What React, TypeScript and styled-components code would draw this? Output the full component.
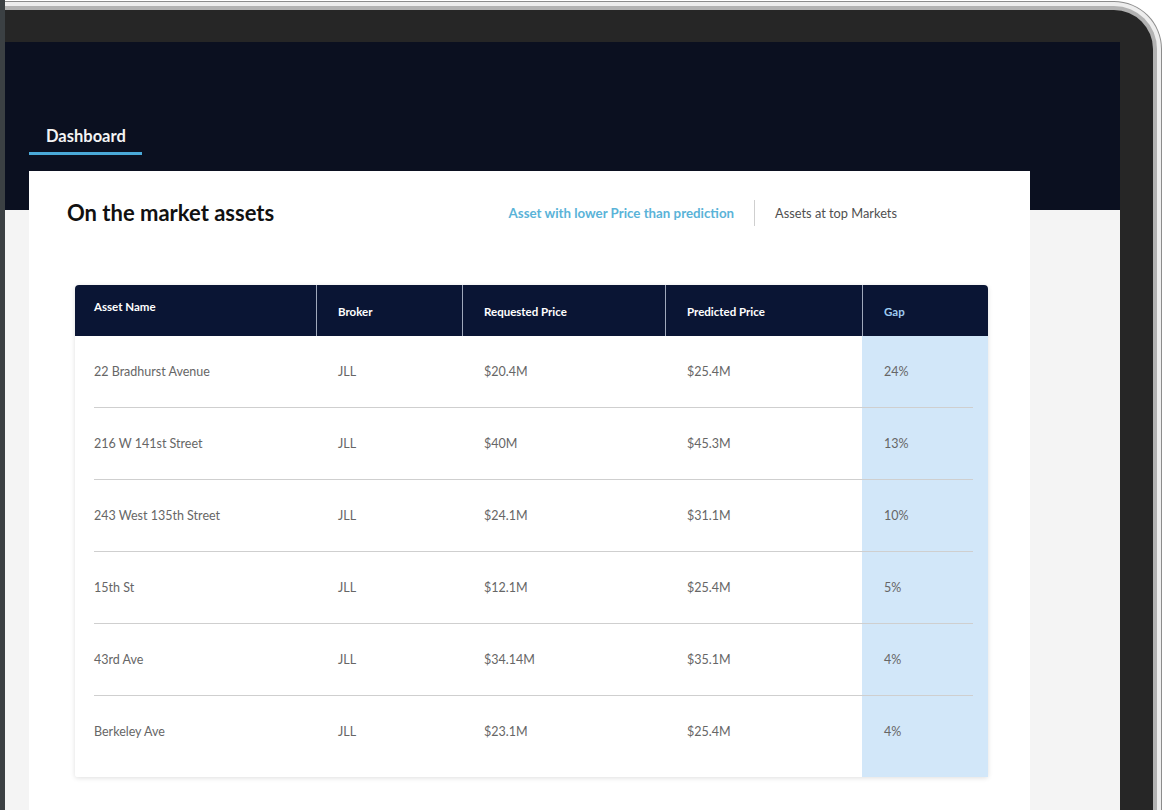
import React from "react";
import styled, {createGlobalStyle, css} from "styled-components";

interface Asset {
    name: string,
    broker: string,
    requested: string,
    predicted: string,
    gap: string
}

const assets: Asset[] = [
    {name: "22 Bradhurst Avenue", broker: "JLL", requested: "$20.4M", predicted: "$25.4M", gap: "24%"},
    {name: "216 W 141st Street", broker: "JLL", requested: "$40M", predicted: "$45.3M", gap: "13%"},
    {name: "243 West 135th Street", broker: "JLL", requested: "$24.1M", predicted: "$31.1M", gap: "10%"},
    {name: "15th St", broker: "JLL", requested: "$12.1M", predicted: "$25.4M", gap: "5%"},
    {name: "43rd Ave", broker: "JLL", requested: "$34.14M", predicted: "$35.1M", gap: "4%"},
    {name: "Berkeley Ave", broker: "JLL", requested: "$23.1M", predicted: "$25.4M", gap: "4%"}
];

const columns = "241px 146px 203px 197px 126px";

const GlobalStyle = createGlobalStyle`
  html, body {
    margin: 0;
    padding: 0;
    background: #ffffff;
    overflow: hidden;
  }

  body {
    font-family: Lato, "Open Sans", "Liberation Sans", sans-serif;
    -webkit-font-smoothing: antialiased;
  }
`;

const Page = styled.div`
  display: flex;
  width: 1166px;
  height: 810px;
  overflow: hidden;
`;

const LeftEdge = styled.div`
  width: 5px;
  flex-shrink: 0;
  background: #3b4043;
`;

// metallic rim round the device, drawn as nested rounded rings
const Rim = styled.div`
  width: 1156px;
  margin-top: 1px;
  padding: 1px 1px 0 0;
  background: #8c8c8c;
  border-top-right-radius: 48px;
`;

const RimLight = styled.div`
  height: 100%;
  padding: 4px 4px 0 0;
  background: #ededed;
  border-top-right-radius: 47px;
  box-sizing: border-box;
`;

const RimShade = styled.div`
  height: 100%;
  padding: 4px 4px 0 0;
  background: #b2b2b2;
  border-top-right-radius: 43px;
  box-sizing: border-box;
`;

const Bezel = styled.div`
  height: 100%;
  padding: 32px 33px 0 0;
  background: #262626;
  border-top-right-radius: 39px;
  box-sizing: border-box;
`;

const Screen = styled.div`
  height: 100%;
  padding: 84px 0 0 24px;
  box-sizing: border-box;
  background: linear-gradient(to bottom, #0b1020 168px, #f4f4f4 168px);
`;

const TabBar = styled.div`
  display: flex;
`;

const Tab = styled.div<{active?: boolean}>`
  padding: 0 16px 6px 17px;
  font-size: 16.5px;
  line-height: 20px;
  font-weight: 700;
  color: #f4f4f4;
  border-bottom: 3px solid ${p => p.active ? "#4aa9d8" : "transparent"};
`;

const Card = styled.div`
  width: 1001px;
  height: 640px;
  margin-top: 16px;
  padding: 29px 42px 0 46px;
  box-sizing: border-box;
  background: #ffffff;
`;

const CardHeader = styled.div`
  display: flex;
  align-items: center;
  justify-content: space-between;
  height: 26px;
  padding: 0 91px 0 0;
  margin-left: -8px;
`;

const Title = styled.h2`
  margin: 0;
  font-size: 22px;
  line-height: 24px;
  font-weight: 700;
  color: #111111;
`;

const Filters = styled.div`
  display: flex;
  align-items: center;
  height: 26px;
`;

const Filter = styled.span<{active?: boolean}>`
  font-size: ${p => p.active ? "13.3px" : "12.8px"};
  font-weight: ${p => p.active ? 700 : 400};
  color: ${p => p.active ? "#5ab3d8" : "#4f4f4f"};
`;

const FilterDivider = styled.span`
  width: 1px;
  height: 26px;
  margin: 0 20px;
  background: #cfcfcf;
`;

const Table = styled.div`
  margin-top: 59px;
  width: 913px;
  border-radius: 4px 4px 2px 2px;
  background: #ffffff;
  box-shadow: 0 1px 5px rgba(0, 0, 0, 0.13);
`;

const HeaderRow = styled.div`
  display: grid;
  grid-template-columns: ${columns};
  height: 51px;
  background: #0a1534;
  border-radius: 4px 4px 0 0;
`;

const HeaderCell = styled.div<{gap?: boolean, raised?: boolean}>`
  display: flex;
  align-items: ${p => p.raised ? "flex-start" : "center"};
  padding: ${p => p.raised ? "15px 19px 0" : "1px 21px 0"};
  font-size: 11.5px;
  font-weight: 700;
  color: ${p => p.gap ? "#9fcbf0" : "#ffffff"};
  border-left: 1px solid rgba(210, 218, 232, 0.75);

  &:first-child {
    border-left: none;
  }
`;

const Row = styled.div`
  position: relative;
  display: grid;
  grid-template-columns: ${columns};
  height: 72px;

  &:first-child {
    height: 75px;
  }

  &:last-child {
    height: 81px;
  }

  &:not(:last-child)::after {
    content: "";
    position: absolute;
    left: 19px;
    right: 15px;
    bottom: 0;
    height: 1px;
    background: #cfcfcf;
  }
`;

const Cell = styled.div<{gap?: boolean}>`
  padding: 28px 19px 0 ${p => p.gap ? "22px" : "19px"};
  font-size: 12.5px;
  line-height: 16px;
  color: #666666;

  ${p => p.gap && css`
    background: #d2e7f9;
  `}
  &:nth-child(2), &:nth-child(3), &:nth-child(4) {
    padding-left: 22px;
  }
`;

export default function App() {
    return (
        <>
            <GlobalStyle/>
            <Page>
                <LeftEdge/>
                <Rim>
                    <RimLight>
                        <RimShade>
                            <Bezel>
                                <Screen>
                                    <TabBar>
                                        <Tab active>Dashboard</Tab>
                                    </TabBar>

                                    <Card>
                                        <CardHeader>
                                            <Title>On the market assets</Title>
                                            <Filters>
                                                <Filter active>Asset with lower Price than prediction</Filter>
                                                <FilterDivider/>
                                                <Filter>Assets at top Markets</Filter>
                                            </Filters>
                                        </CardHeader>

                                        <Table>
                                            <HeaderRow>
                                                <HeaderCell raised>Asset Name</HeaderCell>
                                                <HeaderCell>Broker</HeaderCell>
                                                <HeaderCell>Requested Price</HeaderCell>
                                                <HeaderCell>Predicted Price</HeaderCell>
                                                <HeaderCell gap>Gap</HeaderCell>
                                            </HeaderRow>

                                            {assets.map(a => (
                                                <Row key={a.name}>
                                                    <Cell>{a.name}</Cell>
                                                    <Cell>{a.broker}</Cell>
                                                    <Cell>{a.requested}</Cell>
                                                    <Cell>{a.predicted}</Cell>
                                                    <Cell gap>{a.gap}</Cell>
                                                </Row>
                                            ))}
                                        </Table>
                                    </Card>
                                </Screen>
                            </Bezel>
                        </RimShade>
                    </RimLight>
                </Rim>
            </Page>
        </>
    );
}
